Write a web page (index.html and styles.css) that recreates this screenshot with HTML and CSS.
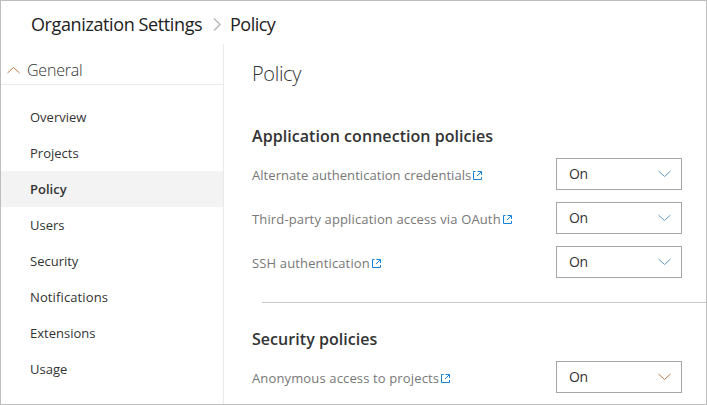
FILE: index.html
```html
<!DOCTYPE html>
<html lang="en">
<head>
<meta charset="utf-8">
<title>Organization Settings</title>
<link rel="stylesheet" href="styles.css">
</head>
<body>
<svg class="symbols" aria-hidden="true">
  <symbol id="external" viewBox="0 0 9 9"><path d="M2.500 .5H.5v8h8V6M4.500 .5h4v3.500M4 5l4-4" fill="none" stroke="currentColor"/></symbol>
  <symbol id="down" viewBox="0 0 13 8"><path d="M.5 1l6 5.500 6-5.500" fill="none" stroke="currentColor"/></symbol>
</svg>
<div class="window">
  <header class="crumbs">
    <span class="crumb-root">Organization Settings</span>
    <svg class="crumb-arrow" viewBox="0 0 8 13"><path d="M1 .5l6 6-6 6" fill="none" stroke="currentColor" stroke-width="1.3"/></svg>
    <span class="crumb-page">Policy</span>
  </header>
  <div class="body">
    <aside class="sidebar">
      <div class="group"><svg class="group-arrow" viewBox="0 0 13 8"><path d="M.5 7l6-5.500 6 5.500" fill="none" stroke="currentColor"/></svg><span>General</span></div>
      <nav class="nav">
        <a>Overview</a>
        <a>Projects</a>
        <a class="active">Policy</a>
        <a>Users</a>
        <a>Security</a>
        <a class="wide">Notifications</a>
        <a>Extensions</a>
        <a>Usage</a>
      </nav>
    </aside>
    <main class="content">
      <h1>Policy</h1>
      <section class="application">
        <h2>Application connection policies</h2>
        <div class="row"><span class="label l-alternate">Alternate authentication credentials</span><svg class="external"><use href="#external"/></svg><div class="select">On<svg class="down"><use href="#down"/></svg></div></div>
        <div class="row"><span class="label">Third-party application access via OAuth</span><svg class="external"><use href="#external"/></svg><div class="select">On<svg class="down"><use href="#down"/></svg></div></div>
        <div class="row"><span class="label">SSH authentication</span><svg class="external"><use href="#external"/></svg><div class="select">On<svg class="down"><use href="#down"/></svg></div></div>
      </section>
      <section class="security">
        <h2>Security policies</h2>
        <div class="row"><span class="label">Anonymous access to projects</span><svg class="external"><use href="#external"/></svg><div class="select warm">On<svg class="down"><use href="#down"/></svg></div></div>
      </section>
    </main>
  </div>
</div>
</body>
</html>
```
FILE: styles.css
```css
* { box-sizing: border-box; }
body { margin: 0; background: #fff; color: #333; font: 14px/20px "Open Sans", "Noto Sans", sans-serif; }
.symbols { display: none; }
svg { flex: none; }
.window { width: 707px; height: 405px; border: 1px solid #bdbdbd; display: flex; flex-direction: column; overflow: hidden; }
.crumbs { height: 43px; flex: none; display: flex; align-items: center; padding: 3px 0 0 30px; font-size: 18px; color: #212121; white-space: nowrap; }
.crumb-root { width: 172px; letter-spacing: -.39px; }
.crumb-arrow { width: 8px; height: 13px; margin: 0 9px 0 10px; color: #b5b5b5; }
.crumb-page { letter-spacing: -.5px; }
.body { flex: 1; min-height: 0; display: flex; }
.sidebar { width: 223px; border-right: 1px solid #eaeaea; }
.group { height: 41px; border-bottom: 1px solid #eaeaea; display: flex; align-items: center; padding: 11px 0 0 6px; font-size: 16px; font-weight: 300; letter-spacing: -.2px; color: #333; }
.group-arrow { width: 13px; height: 8px; margin-right: 7px; color: #b97845; }
.nav { padding-top: 14px; }
.nav a { display: flex; align-items: center; height: 36px; padding-left: 29px; font-size: 13px; }
.nav .wide { letter-spacing: .12px; }
.nav .active { background: #f3f3f3; font-weight: 600; }
.content { flex: 1; padding-left: 28px; }
h1 { margin: 17px 0 0; font-size: 20px; line-height: 26px; font-weight: 300; letter-spacing: -.35px; color: #333; }
h2 { margin: 0; font-size: 16px; line-height: 22px; font-weight: 600; letter-spacing: .05px; color: #333; }
.application { height: 216px; padding-top: 38px; position: relative; }
.application h2, .security h2 { margin-bottom: 11px; }
.application::after { content: ""; position: absolute; left: 10px; right: 0; bottom: 0; height: 1px; background: #c8c8c8; }
.security { padding-top: 25px; }
.row { display: flex; align-items: center; height: 32px; margin-bottom: 12px; padding-right: 24px; }
.label { font-size: 13px; letter-spacing: .14px; color: #777; padding-top: 1px; white-space: nowrap; }
.l-alternate { letter-spacing: .05px; }
.external { width: 9px; height: 9px; margin: 3px 0 0 2px; color: #1681d8; }
.select { width: 126px; height: 32px; margin-left: auto; border: 1px solid #a6a6a6; display: flex; align-items: center; justify-content: space-between; padding: 0 10px 0 12px; font-size: 14px; letter-spacing: -.4px; }
.down { width: 13px; height: 8px; color: #6299c0; }
.warm .down { color: #b97845; }
```
